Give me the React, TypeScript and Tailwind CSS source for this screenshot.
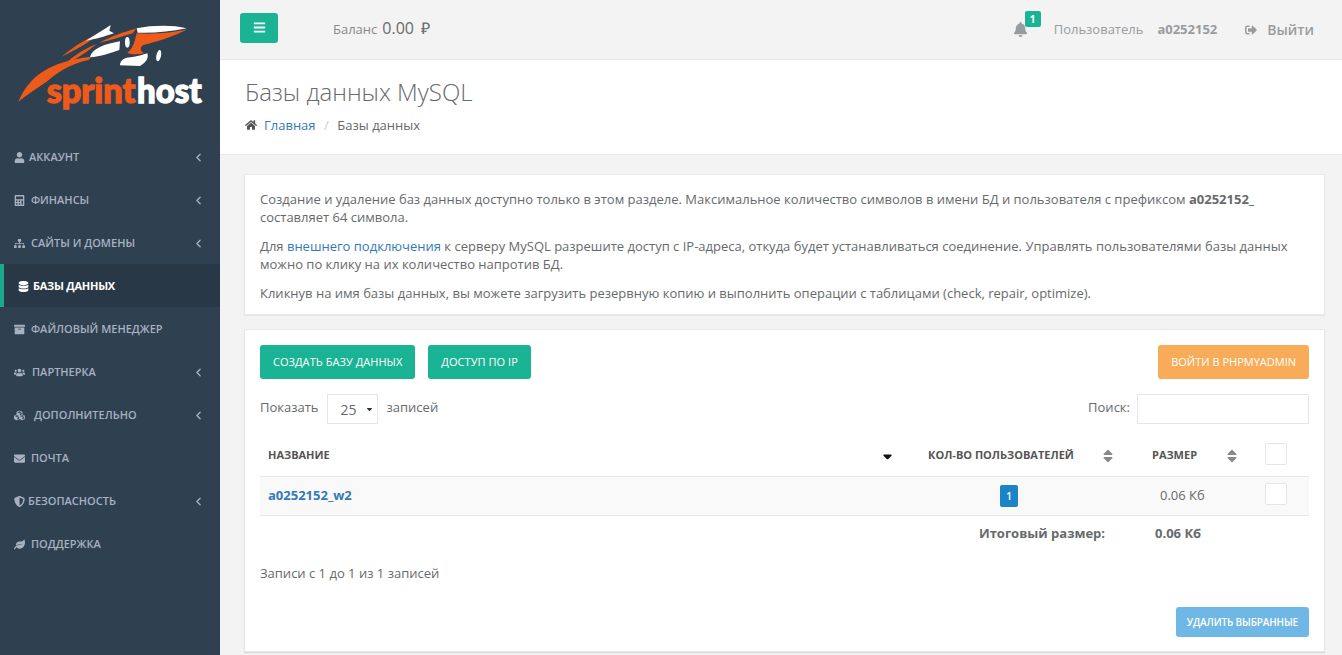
import type { ReactNode } from "react";
import { ChevronLeft } from "lucide-react";
import {
  FaArchive,
  FaBars,
  FaBell,
  FaCalculator,
  FaCubes,
  FaDatabase,
  FaEnvelope,
  FaHome,
  FaLeaf,
  FaShieldAlt,
  FaSignOutAlt,
  FaSitemap,
  FaSort,
  FaSortDown,
  FaUser,
  FaUsers,
} from "react-icons/fa";

const menu = [
  { label: "Аккаунт", icon: <FaUser />, slot: "w-[15px]", arrow: true },
  { label: "Финансы", icon: <FaCalculator />, slot: "w-[17px]", arrow: true },
  { label: "Сайты и домены", icon: <FaSitemap />, slot: "w-[17px]", arrow: true },
  { label: "Базы данных", icon: <FaDatabase />, slot: "w-[15px]", active: true },
  { label: "Файловый менеджер", icon: <FaArchive />, slot: "w-[17px]" },
  { label: "Партнерка", icon: <FaUsers />, slot: "w-[18px]", arrow: true },
  { label: "Дополнительно", icon: <FaCubes />, slot: "w-[20px]", arrow: true },
  { label: "Почта", icon: <FaEnvelope />, slot: "w-[17px]" },
  { label: "Безопасность", icon: <FaShieldAlt />, slot: "w-[14px]", arrow: true },
  { label: "Поддержка", icon: <FaLeaf />, slot: "w-[17px]" },
];

function Logo() {
  return (
    <svg viewBox="0 0 660 390" className="block h-[130px] w-[220px]">
      {/* swoosh */}
      <path d="M55 305C90 225 150 185 272 170C270 176 268 178 265 180C215 190 175 215 140 245C110 265 80 285 55 305Z" fill="#ee5a1a" />
      <path d="M185 170C225 135 270 110 305 98L265 126C245 140 215 155 185 170Z" fill="#ee5a1a" />
      <path d="M190 195C225 165 255 145 290 132C265 152 240 172 190 195Z" fill="#ee5a1a" />
      <path d="M298 128C335 108 375 94 408 86L398 100C365 110 330 122 298 128Z" fill="#ee5a1a" />
      <path d="M382 158C400 146 405 120 410 100C460 104 520 98 562 88C520 110 465 128 432 134C420 140 418 150 432 160C410 164 395 164 382 158Z" fill="#ee5a1a" />
      {/* car, white parts */}
      <path d="M258 122C285 105 310 90 332 75L328 92L342 100C318 108 285 118 258 122Z" fill="#fff" />
      <path d="M270 172C275 150 300 135 360 124L358 150C335 158 300 170 270 172Z" fill="#fff" />
      <path d="M410 85C460 75 520 75 560 85C510 95 460 100 413 98Z" fill="#fff" />
      <path d="M360 196C360 180 375 172 392 172C410 170 430 164 442 160C446 172 442 185 420 198Z" fill="#fff" />
      <ellipse cx="382" cy="127" rx="7" ry="16" fill="#fff" />
      <ellipse cx="476" cy="167" rx="7" ry="17" transform="rotate(12 476 167)" fill="#fff" />
      {/* wordmark */}
      <text x="140" y="308" textLength="266" lengthAdjust="spacingAndGlyphs" fontFamily="Lato, sans-serif" fontWeight="900" fontSize="104" fill="#ee5a1a" stroke="#ee5a1a" strokeWidth="4">
        sprint
      </text>
      <text x="411" y="308" textLength="194" lengthAdjust="spacingAndGlyphs" fontFamily="Lato, sans-serif" fontWeight="900" fontSize="104" fill="#fff" stroke="#fff" strokeWidth="4">
        host
      </text>
    </svg>
  );
}

function Sidebar() {
  return (
    <aside className="flex w-[220px] shrink-0 flex-col bg-[#2f4050]">
      <div className="h-[135px]">
        <Logo />
      </div>
      {menu.map((item) => (
        <div
          key={item.label}
          className={
            item.active
              ? "flex h-[43px] items-center border-l-4 border-[#19aa8d] bg-[#293846] pl-[14px] pr-[15px] pt-[1px] text-[11px] font-bold uppercase tracking-[-0.25px] text-white"
              : "flex h-[43px] items-center pl-[14px] pr-[15px] pt-[1px] text-[11px] font-semibold uppercase text-[#a7b1c2]"
          }
        >
          <span className="flex flex-1 items-center">
            <span className={`${item.slot} shrink-0 text-[11px]`}>{item.icon}</span>
            {item.label}
          </span>
          {item.arrow && <ChevronLeft size={13} strokeWidth={2.5} />}
        </div>
      ))}
    </aside>
  );
}

function TopBar() {
  return (
    <header className="flex h-[60px] shrink-0 items-center border-b border-[#e7eaec] bg-[#f3f3f4] pl-5 pr-7 text-[#999c9e]">
      <button className="-mt-[4px] flex h-[30px] w-[38px] items-center justify-center rounded-[3px] bg-[#1ab394] text-[13px] text-white">
        <FaBars />
      </button>
      <div className="-mt-[3px] ml-[55px] flex items-baseline gap-[5px] text-[13px] text-[#888]">
        Баланс
        <span className="text-[16px] text-[#676a6c]">0.00</span>
        <span className="ml-[2px] text-[16px] text-[#676a6c]">₽</span>
      </div>
      <div className="relative ml-auto text-[15px]">
        <FaBell />
        <span className="absolute -top-[11px] left-[12px] flex h-4 w-4 items-center justify-center rounded-[2px] bg-[#1ab394] text-[10px] font-bold text-white">
          1
        </span>
      </div>
      <span className="ml-[26px] text-[13px]">Пользователь</span>
      <span className="ml-[14px] text-[13px] font-bold">a0252152</span>
      <span className="ml-[28px] flex items-center gap-[10px] text-[14px] font-semibold">
        <FaSignOutAlt className="text-[12px]" />
        Выйти
      </span>
    </header>
  );
}

function TealButton({ children }: { children: ReactNode }) {
  return (
    <button className="h-[34px] rounded-[3px] bg-[#1ab394] px-[13px] text-[11px] font-medium uppercase tracking-[0.05px] text-white">
      {children}
    </button>
  );
}

function CheckBox() {
  return <span className="block h-[22px] w-[22px] rounded-[2px] border border-[#e5e6e7] bg-white" />;
}

export default function App() {
  return (
    <div className="flex h-[655px] overflow-hidden bg-[#f3f3f4] font-['Open_Sans',sans-serif] text-[13px] text-[#676a6c]">
      <Sidebar />
      <main className="flex min-w-0 flex-1 flex-col">
        <TopBar />

        {/* Page heading */}
        <div className="h-[95px] shrink-0 border-b border-[#e7eaec] bg-white pl-[25px] pt-[16px]">
          <h1 className="text-[24px] font-light leading-[32px]">Базы данных MySQL</h1>
          <div className="mt-[8px] flex items-center text-[13px] leading-[18px]">
            <FaHome className="mr-[7px] text-[12px] text-[#555]" />
            <span className="text-[#337ab7]">Главная</span>
            <span className="mx-[8.5px] text-[#ccc]">/</span>
            <span>Базы данных</span>
          </div>
        </div>

        <div className="flex flex-col gap-[14px] pl-6 pr-[17px] pt-[19px]">
          {/* Info card */}
          <section className="h-[141px] border border-[#e7eaec] bg-white px-[15px] pt-[14.6px] leading-[18.57px] shadow-[0_1px_1px_rgba(0,0,0,0.05)]">
            <p>
              Создание и удаление баз данных доступно только в этом разделе. Максимальное количество символов в имени БД и пользователя с префиксом <b>a0252152_</b> составляет 64 символа.
            </p>
            <p className="mt-[10px]">
              Для <span className="text-[#337ab7]">внешнего подключения</span> к серверу MySQL разрешите доступ с IP-адреса, откуда будет устанавливаться соединение. Управлять пользователями базы данных можно по клику на их количество напротив БД.
            </p>
            <p className="mt-[10px]">
              Кликнув на имя базы данных, вы можете загрузить резервную копию и выполнить операции с таблицами (check, repair, optimize).
            </p>
          </section>

          {/* Table card */}
          <section className="h-[323px] border border-[#e7eaec] bg-white px-[15px] pt-[15px] shadow-[0_1px_1px_rgba(0,0,0,0.1)]">
            <div className="flex gap-[13px]">
              <TealButton>Создать базу данных</TealButton>
              <TealButton>Доступ по IP</TealButton>
              <button className="ml-auto h-[34px] rounded-[3px] bg-[#f8ac59] px-[13px] text-[11px] font-normal uppercase text-white">
                Войти в phpMyAdmin
              </button>
            </div>

            <div className="mt-[15px] flex h-[30px] items-center">
              <span className="-mt-[2px]">Показать</span>
              <span className="ml-[8px] flex h-[30px] w-[51px] items-center gap-[8px] border border-[#e5e6e7] pl-[13px] text-[14px]">
                25
                <FaSortDown className="-mt-[4px] text-[9px] text-[#333]" />
              </span>
              <span className="-mt-[2px] ml-[9px]">записей</span>
              <span className="-mt-[2px] ml-auto">Поиск:</span>
              <span className="ml-[7px] h-[30px] w-[172px] border border-[#e5e6e7]" />
            </div>

            {/* Table header */}
            <div className="mt-[11px] grid h-[42px] grid-cols-[640px_227px_125px_1fr] items-center border-b border-[#e7e7e7] text-[11px] font-bold uppercase text-[#555]">
              <div className="flex items-center justify-between pl-2">
                Название
                <FaSortDown className="mr-[5px] -mt-[5px] text-[15px] text-[#111]" />
              </div>
              <div className="flex items-center justify-between pl-[28px] pr-[11px]">
                Кол-во пользователей
                <FaSort className="text-[16px] text-[#888]" />
              </div>
              <div className="flex items-center justify-between pl-[25px] pr-[12px]">
                Размер
                <FaSort className="text-[16px] text-[#888]" />
              </div>
              <div className="-mt-[4px] pl-[13px]">
                <CheckBox />
              </div>
            </div>

            {/* Table row */}
            <div className="grid h-[39px] grid-cols-[640px_227px_125px_1fr] items-center border-b border-[#e7e7e7] bg-[#f9f9f9]">
              <div className="pl-2 font-bold text-[#337ab7]">a0252152_w2</div>
              <div className="pl-[100px]">
                <span className="flex h-[22px] w-[18px] items-center justify-center rounded-[2px] bg-[#1c84c6] text-[10px] font-semibold text-white">
                  1
                </span>
              </div>
              <div className="pl-[33px]">0.06 Кб</div>
              <div className="-mt-[4px] pl-[13px]">
                <CheckBox />
              </div>
            </div>

            {/* Totals */}
            <div className="grid h-[36px] grid-cols-[845px_1fr] items-center font-bold">
              <div className="text-right">Итоговый размер:</div>
              <div className="pl-[50px]">0.06 Кб</div>
            </div>

            <div className="mt-[12px] leading-[18px]">Записи с 1 до 1 из 1 записей</div>

            <div className="mt-[25px] flex justify-end">
              <button className="h-[30px] rounded-[3px] bg-[#6fb7e5] px-[11px] text-[10px] font-semibold uppercase tracking-[-0.15px] text-white">
                Удалить выбранные
              </button>
            </div>
          </section>
        </div>
      </main>
    </div>
  );
}
